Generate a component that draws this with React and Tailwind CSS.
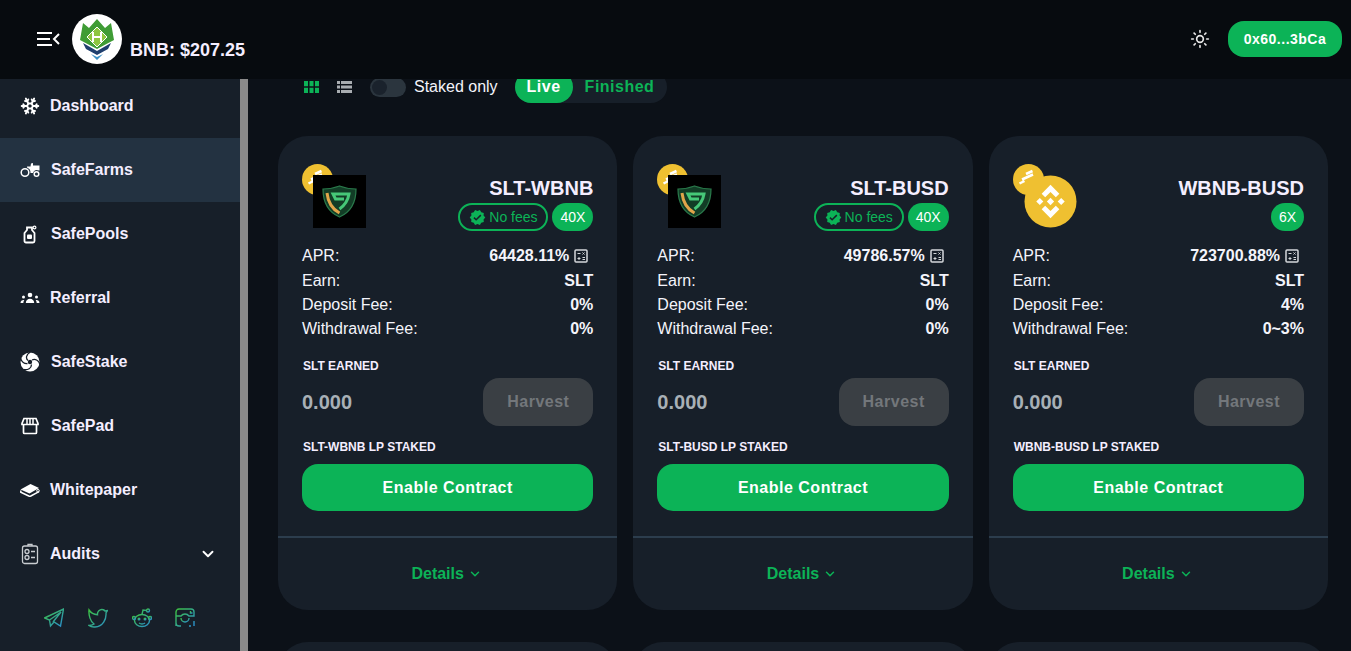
import { ChevronDown, Snowflake, Sun } from "lucide-react";
import { MdVerified } from "react-icons/md";

const navItems = [
  { label: "Dashboard", icon: <Snowflake size={20} strokeWidth={2.200} /> },
  { label: "SafeFarms", icon: <TractorIcon />, active: true, wide: true },
  { label: "SafePools", icon: <BottleIcon />, wide: true },
  { label: "Referral", icon: <UsersIcon /> },
  { label: "SafeStake", icon: <SwirlIcon />, wide: true },
  { label: "SafePad", icon: <StoreIcon />, wide: true },
  { label: "Whitepaper", icon: <BookIcon /> },
  { label: "Audits", icon: <ClipboardIcon />, caret: true },
];

const farms = [
  { name: "SLT-WBNB", mult: "40X", apr: "64428.11%", noFees: true, deposit: "0%", withdraw: "0%", logo: "shield" },
  { name: "SLT-BUSD", mult: "40X", apr: "49786.57%", noFees: true, deposit: "0%", withdraw: "0%", logo: "shield" },
  { name: "WBNB-BUSD", mult: "6X", apr: "723700.88%", deposit: "4%", withdraw: "0~3%", logo: "bnb" },
];

function TractorIcon() {
  return (
    <svg width="20" height="20" viewBox="0 0 20 20" fill="none">
      <circle cx="5" cy="12.500" r="3.800" stroke="currentColor" strokeWidth="1.500" />
      <circle cx="16.500" cy="14" r="2.300" stroke="currentColor" strokeWidth="1.500" />
      <path d="M7 6.500h3.500L11 3.500l2-.5v2.500h6.500V10.500L16 10a4 4 0 0 0-3 3h-2.500A5.500 5.500 0 0 0 7 7.500z" fill="currentColor" />
    </svg>
  );
}

function UsersIcon() {
  return (
    <svg width="20" height="20" viewBox="0 0 20 20" fill="currentColor">
      <circle cx="10" cy="7" r="2.300" />
      <path d="M5.800 15a4.200 4.200 0 0 1 8.400 0z" />
      <circle cx="3.500" cy="9" r="1.500" />
      <path d="M.5 15a3 3 0 0 1 3.800-2.900c-.5.800-.9 1.800-1 2.900z" />
      <circle cx="16.500" cy="9" r="1.500" />
      <path d="M19.500 15a3 3 0 0 0-3.800-2.900c.5.800.9 1.800 1 2.900z" />
    </svg>
  );
}

function BottleIcon() {
  return (
    <svg width="20" height="20" viewBox="0 0 20 20" fill="none" stroke="currentColor" strokeWidth="1.800">
      <path d="M7 3.500h5v2.500l2.500 3v8a1.500 1.500 0 0 1-1.500 1.500H6A1.500 1.500 0 0 1 4.500 17V9L7 6z" />
      <rect x="7" y="10.500" width="5" height="4.500" rx="1" fill="currentColor" stroke="none" />
      <circle cx="14.500" cy="3.500" r="1.400" strokeWidth="1.200" />
    </svg>
  );
}

function SwirlIcon() {
  return (
    <svg width="20" height="20" viewBox="0 0 20 20" fill="none">
      <circle cx="10" cy="10" r="9.500" fill="currentColor" />
      <path d="M8 8.500C5.500 6.500 6 2.500 10.500 0M12 8c3-1.500 6.500 0 8 4.500M11.500 12.500c0 3.500-3.500 6-8 5M7.500 11.500C4.500 12 1.500 10 .5 6" stroke="#171f29" strokeWidth="1.300" />
      <circle cx="10" cy="10" r="2.200" fill="#171f29" />
    </svg>
  );
}

function StoreIcon() {
  return (
    <svg width="20" height="20" viewBox="0 0 20 20" fill="none" stroke="currentColor" strokeWidth="1.700">
      <path d="M4 2.500h12l2 5v1H2v-1zM3.500 9v7.500a1 1 0 0 0 1 1h11a1 1 0 0 0 1-1V9" />
      <path d="M7 3v5M10 3v5M13 3v5" strokeWidth="1.500" />
    </svg>
  );
}

function BookIcon() {
  return (
    <svg width="20" height="20" viewBox="0 0 20 20" fill="none">
      <path d="M.5 9.500 10.500 4l8.500 4-9.500 5.500z" fill="currentColor" />
      <path d="M.8 10.500v1.800l8 3.700c.7.300 1.300.3 2 0l8.200-4.300" stroke="currentColor" strokeWidth="1.500" />
      <circle cx="18" cy="10.800" r="1.300" stroke="currentColor" strokeWidth="1" />
    </svg>
  );
}

function ClipboardIcon() {
  return (
    <svg width="20" height="22" viewBox="0 0 20 22" fill="none" stroke="#c9cdd1" strokeWidth="1.300">
      <rect x="2.500" y="3" width="15" height="17.500" rx="2" />
      <path d="M8 3V1.500h4V3" />
      <circle cx="7" cy="8.500" r="2" />
      <circle cx="7" cy="14.500" r="2" />
      <path d="M11 8.500h4M11 14.500h4" />
    </svg>
  );
}

function SocialGradient() {
  return (
    <svg width="0" height="0" className="absolute">
      <defs>
        <linearGradient id="social" x1="0" y1="0" x2="1" y2="1">
          <stop offset="0" stopColor="#3dc23f" />
          <stop offset="1" stopColor="#2a8fd0" />
        </linearGradient>
      </defs>
    </svg>
  );
}

function Logo() {
  return (
    <svg width="50" height="50" viewBox="0 0 50 50" className="rounded-full bg-white">
      <path d="M11 9l6 5 8-9 8 9 6-5 3 17-17 9-17-9z" fill="#3f9c35" />
      <path d="M25 13l10 10-10 10-10-10z" fill="#8dc63f" stroke="#fff" strokeWidth="1" />
      <path d="M21 18v10M29 18v10M21 23h8" stroke="#fff" strokeWidth="2" fill="none" />
      <path d="M11 29l14 8 14-8-3 6-11 6-11-6z" fill="#1f3f6e" />
      <path d="M19 40l6 6 6-6-6 3z" fill="#3b8fc4" />
    </svg>
  );
}

function BnbMark({ size }) {
  return (
    <svg width={size} height={size} viewBox="0 0 54 54">
      <circle cx="27" cy="27" r="26.500" fill="#efc031" />
      <path
        d="M27 10l9 9-3.600 3.600L27 17.200l-5.400 5.400L18 19zM12.500 27l3.600-3.600 3.600 3.600-3.600 3.600zM34.300 27l3.600-3.600 3.600 3.600-3.600 3.600zM23.300 27l3.700-3.700 3.700 3.700-3.700 3.700zM27 44l-9-9 3.600-3.600 5.400 5.400 5.400-5.400L36 35z"
        fill="#fff"
      />
    </svg>
  );
}

function BusdCoin() {
  return (
    <svg width="31" height="31" viewBox="0 0 31 31" fill="none">
      <circle cx="15.500" cy="15.500" r="15.500" fill="#efc031" />
      <path d="M13 10l6.500-3M9 15.500l11-5M6.500 19.500l5-2.500" stroke="#fff" strokeWidth="2.500" />
    </svg>
  );
}

function ShieldLogo() {
  return (
    <div className="w-[53px] h-[53px] bg-black flex items-center justify-center">
      <svg width="35" height="33" viewBox="0 0 35 33" fill="none">
        <path d="M17.500 1c5 2 10.500 3 16.500 3 0 13-5 23-16.500 28C6 27 1 17 1 4c6 0 11.500-1 16.500-3z" fill="#123d26" stroke="#2a7a4b" strokeWidth="1.200" />
        <path d="M5 8c1 9 5 16 12.500 20" stroke="#e0a54a" strokeWidth="3" />
        <path d="M17.500 24c5-3.500 8.500-9 9.500-15H11l2.500 5H22" stroke="#46c878" strokeWidth="3" />
      </svg>
    </div>
  );
}

function CalcIcon() {
  return (
    <svg width="14" height="14" viewBox="0 0 14 14" fill="none" stroke="#d5d8db" className="mr-[5px]">
      <rect x="1" y="1" width="12" height="12" rx="1" strokeWidth="1.500" />
      <path d="M3.500 4.500h3M8.500 3.500l2 2M10.500 3.500l-2 2M3.500 9.500h3M5 8v3M8.500 8.500h2.500M8.500 10.500h2.500" strokeWidth="1" />
    </svg>
  );
}

function Row({ label, value, icon, tall }) {
  return (
    <div className={`flex justify-between items-center ${tall ? "h-[26px]" : "h-6"}`}>
      <span>{label}</span>
      <span className="flex items-center gap-[5px] font-bold">
        {value}
        {icon}
      </span>
    </div>
  );
}

function FarmCard({ farm }) {
  return (
    <div className="bg-[#171f29] rounded-[30px] h-[474px] flex flex-col">
      <div className="px-6 pt-7 flex-1">
        <div className="flex justify-between h-[67px]">
          <div className="relative w-[64px] h-[64px]">
            <div className="absolute left-0 top-0">
              <BusdCoin />
            </div>
            <div className="absolute left-[11px] top-[11px]">
              {farm.logo === "shield" ? <ShieldLogo /> : <BnbMark size={53} />}
            </div>
          </div>
          <div className="flex flex-col items-end pt-[12px]">
            <div className="text-xl leading-6 font-bold text-[#f4eeff]">{farm.name}</div>
            <div className="flex gap-1 mt-[3px]">
              {farm.noFees && (
                <span className="h-7 w-[90px] rounded-full border-2 border-[#0cb357] text-[#0cb357] text-sm flex items-center justify-center gap-[3px]">
                  <MdVerified size={17} />
                  No fees
                </span>
              )}
              <span className="h-7 px-[8px] rounded-full bg-[#0cb357] text-white text-sm flex items-center">
                {farm.mult}
              </span>
            </div>
          </div>
        </div>
        <div className="mt-3 text-[#f4f4fb] text-base">
          <Row label="APR:" value={farm.apr} icon={<CalcIcon />} tall />
          <Row label="Earn:" value="SLT" />
          <Row label="Deposit Fee:" value={farm.deposit} />
          <Row label="Withdrawal Fee:" value={farm.withdraw} />
        </div>
        <div className="mt-[17px] text-xs leading-4 font-bold text-[#f4eeff] ml-px">SLT EARNED</div>
        <div className="mt-1 flex justify-between items-center">
          <span className="text-xl font-bold text-[#a8b0b6]">0.000</span>
          <button className="w-[110px] h-12 rounded-2xl bg-[#3a3f44] text-[#73777b] font-bold tracking-[0.5px]">
            Harvest
          </button>
        </div>
        <div className="mt-[13px] text-xs leading-4 font-bold text-[#f4eeff] ml-px">{farm.name} LP STAKED</div>
        <button className="mt-[9px] w-full h-[47px] rounded-2xl bg-[#0cb357] text-white font-bold tracking-[0.5px]">
          Enable Contract
        </button>
      </div>
      <div className="h-[2px] bg-[#2c3d4d]" />
      <div className="h-[72px] flex items-center justify-center gap-1 pr-[2px] text-[#0cb357] font-bold">
        Details
        <ChevronDown size={14} strokeWidth={2.500} />
      </div>
    </div>
  );
}

export default function App() {
  return (
    <div className="h-[651px] overflow-hidden flex flex-col bg-[#0c1118] text-white font-['Liberation_Sans',Arial,sans-serif]">
      <SocialGradient />
      {/* top bar */}
      <header className="h-[79px] shrink-0 bg-[#070b0f] flex items-center pl-[37px] pr-[9px] relative z-10">
        <svg width="23" height="16" viewBox="0 0 23 16" fill="none" stroke="#fff" strokeWidth="2" className="mr-[12px] -mt-[2px]">
          <path d="M0 2h15M0 8h13M0 14h15M22 3l-5 5 5 5" />
        </svg>
        <div className="-mt-[2px]">
          <Logo />
        </div>
        <span className="ml-2 mt-[21px] text-lg font-bold text-[#f4eeff]">BNB: $207.25</span>
        <Sun size={20} className="ml-auto -mt-[2px] text-[#e8e8e8]" />
        <button className="ml-[18px] -mt-[2px] w-[114px] h-9 rounded-2xl bg-[#0cb357] text-white text-sm font-bold tracking-[0.5px]">
          0x60...3bCa
        </button>
      </header>

      <div className="flex-1 flex min-h-0">
        {/* sidebar */}
        <aside className="w-[240px] shrink-0 bg-[#171f29] overflow-hidden flex flex-col">
          <nav className="-mt-[5px]">
            {navItems.map((item) => (
              <div key={item.label} className={`h-16 flex items-center pl-5 pr-[23px] font-bold text-[#f4eeff] ${item.active ? "bg-[#233241]" : ""}`}>
                <span className="w-5 flex justify-center text-white">{item.icon}</span>
                <span className={item.wide ? "ml-[11px]" : "ml-[10px]"}>{item.label}</span>
                {item.caret && <ChevronDown size={18} strokeWidth={2.500} className="ml-auto text-white" />}
              </div>
            ))}
          </nav>
          <div className="flex gap-6 pl-11 mt-[22px]">
            <svg width="20" height="20" viewBox="0 0 20 20" fill="none" stroke="url(#social)" strokeWidth="1.400">
              <path d="M.5 10 19.500 1 16.500 18 10 14l-3.500 4-1-6zM5.500 12 17 4 9 14" />
            </svg>
            <svg width="20" height="20" viewBox="0 0 20 20" fill="none" stroke="url(#social)" strokeWidth="1.400">
              <path d="M1 2c2 3 5 4.500 8.500 4.800C9 3.500 12 1 14.500 1.500c1.200.2 2 .8 2.500 1.500l2.500-.5-1.500 2.500c.5 6-3 13.500-11 14-2.500.2-4.500-.3-6-1.500 2 0 3.500-.5 5-1.500C2.500 14 .5 7 1 2z" />
            </svg>
            <svg width="20" height="20" viewBox="0 0 20 20" fill="none" stroke="url(#social)" strokeWidth="1.400">
              <ellipse cx="10" cy="12.500" rx="7.500" ry="6" />
              <circle cx="2" cy="10" r="1.500" />
              <circle cx="18" cy="10" r="1.500" />
              <circle cx="16" cy="2.500" r="1.500" />
              <path d="M10 6.500 11 2l3.500.5M7 15c2 1.300 4 1.300 6 0" />
              <circle cx="7" cy="11" r=".8" />
              <circle cx="13" cy="11" r=".8" />
            </svg>
            <svg width="20" height="20" viewBox="0 0 20 20" fill="none" stroke="url(#social)" strokeWidth="1.400" className="-ml-px">
              <path d="M1 18V4a3 3 0 0 1 3-3h12a3 3 0 0 1 3 3v4H14a5 5 0 0 0-8 0H1M6 18H4a3 3 0 0 1-3-3M19 13v5M14 18h2" />
              <path d="M6 10a4 4 0 0 0 8 0" />
              <path d="M15.500 3v2h2" />
            </svg>
          </div>
        </aside>
        <div className="w-2 shrink-0 bg-[#8a8a8a]" />

        {/* main */}
        <main className="flex-1 min-w-0 overflow-hidden pl-[30px] pr-[23px]">
          <div className="-mt-[8px] h-8 flex items-center pl-[26px]">
            <svg width="15" height="12" viewBox="0 0 15 12" fill="#0cb357">
              <path d="M0 0h4v5.200H0zM5.500 0h4v5.200h-4zM11 0h4v5.200h-4zM0 6.800h4V12H0zM5.500 6.800h4V12h-4zM11 6.800h4V12h-4z" />
            </svg>
            <svg width="15" height="12" viewBox="0 0 15 12" fill="#a9adb1" className="ml-[18px]">
              <path d="M0 0h3v3H0zM4 0h11v3H4zM0 4.500h3v3H0zM4 4.500h11v3H4zM0 9h3v3H0zM4 9h11v3H4z" />
            </svg>
            <div className="ml-[18px] w-9 h-[19px] rounded-full bg-[#2b353e] p-[2px]">
              <div className="w-[15px] h-[15px] rounded-full bg-[#1a222c]" />
            </div>
            <span className="ml-2 text-[#f4f4fb]">Staked only</span>
            <div className="ml-[17px] w-[152px] h-8 rounded-full bg-[#171f29] flex items-center font-bold tracking-[0.5px]">
              <span className="w-[58px] h-full rounded-full bg-[#0cb357] text-white flex items-center justify-center">Live</span>
              <span className="ml-[12px] text-[#0cb357]">Finished</span>
            </div>
          </div>
          <div className="mt-[33px] grid grid-cols-3 gap-4">
            {farms.map((farm) => (
              <FarmCard key={farm.name} farm={farm} />
            ))}
            <div className="h-[200px] rounded-[30px] bg-[#171f29] mt-4" />
            <div className="h-[200px] rounded-[30px] bg-[#171f29] mt-4" />
            <div className="h-[200px] rounded-[30px] bg-[#171f29] mt-4" />
          </div>
        </main>
      </div>
    </div>
  );
}
